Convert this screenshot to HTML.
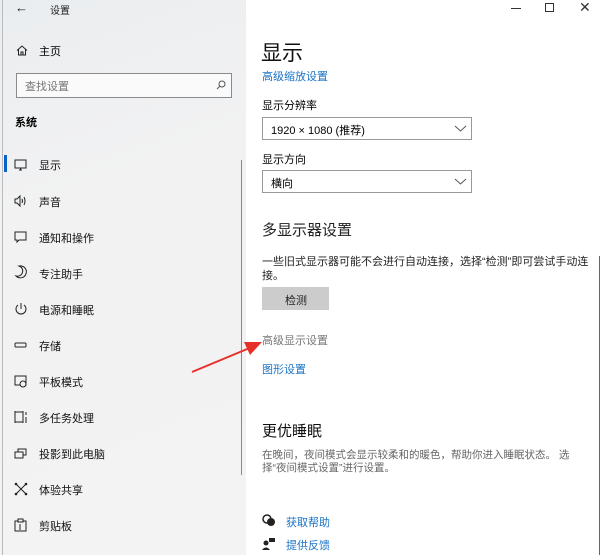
<!DOCTYPE html>
<html><head><meta charset="utf-8"><style>
*{margin:0;padding:0;box-sizing:border-box}
body{width:602px;height:555px;overflow:hidden;background:#fff;position:relative;font-family:"Liberation Sans","Noto Sans CJK SC",sans-serif;color:#000}
.a{position:absolute;white-space:nowrap}
#left{position:absolute;left:0;top:0;width:246px;height:555px;background:linear-gradient(160deg,#eaedf0 0%,#f2f2f2 35%,#f3f3f3 100%)}
.it{position:absolute;left:39px;font-size:11px;color:#111}
.ic{position:absolute;left:14px;width:14px;height:14px}
.lnk{color:#1a73c4}
svg{overflow:visible}
</style></head><body>
<div id="left"></div>
<div class="a" style="left:2px;top:0;width:1px;height:555px;background:#bbb"></div>
<div class="a" style="left:15px;top:0;font-size:13px;color:#222">←</div>
<div class="a" style="left:50px;top:2px;font-size:10px;color:#222">设置</div>
<svg class="a" style="left:16px;top:45px" width="12" height="11" viewBox="0 0 12 11"><path d="M1 5.5L6 1L11 5.5M2.5 4.5V10H9.5V4.5M5 10V7H7V10" fill="none" stroke="#222" stroke-width="1"/></svg>
<div class="a" style="left:39px;top:43px;font-size:11px">主页</div>
<div class="a" style="left:16px;top:73px;width:216px;height:25px;border:1px solid #8a8a8a;background:#fafafa"></div>
<div class="a" style="left:25px;top:78px;font-size:11px;color:#777">查找设置</div>
<svg class="a" style="left:216px;top:80px" width="10" height="10"><circle cx="6" cy="4" r="3" fill="none" stroke="#555"/><path d="M4 6L1 9" stroke="#555"/></svg>
<div class="a" style="left:15px;top:114px;font-size:11px;font-weight:bold">系统</div>
<div class="a" style="left:4px;top:155px;width:3px;height:17px;background:#0a64c8"></div>
<div class="a" style="left:241px;top:160px;width:1px;height:315px;background:#888"></div>

<svg class="ic" style="top:158px" viewBox="0 0 14 14"><rect x="1" y="2" width="11" height="8" fill="none" stroke="#222"/><path d="M5 12H8M6.5 10V12" stroke="#222"/></svg>
<div class="it" style="top:157px">显示</div>
<svg class="ic" style="top:194px" viewBox="0 0 14 14"><path d="M1 5H3L6 2V12L3 9H1Z" fill="none" stroke="#222"/><path d="M8 5Q9 7 8 9M10 3Q12 7 10 11" fill="none" stroke="#222"/></svg>
<div class="it" style="top:194px">声音</div>
<svg class="ic" style="top:230px" viewBox="0 0 14 14"><path d="M1 2H12V10H5L3 12V10H1Z" fill="none" stroke="#222"/></svg>
<div class="it" style="top:230px">通知和操作</div>
<svg class="ic" style="top:265px" viewBox="0 0 14 14"><path d="M5 1A6 6 0 1 1 2 11A5 5 0 0 0 5 1Z" fill="none" stroke="#222"/></svg>
<div class="it" style="top:266px">专注助手</div>
<svg class="ic" style="top:302px" viewBox="0 0 14 14"><path d="M4 3A5 5 0 1 0 10 3" fill="none" stroke="#222"/><path d="M7 1V7" stroke="#222"/></svg>
<div class="it" style="top:302px">电源和睡眠</div>
<svg class="ic" style="top:338px" viewBox="0 0 14 14"><rect x="1" y="5" width="11" height="4" rx="1" fill="none" stroke="#222"/></svg>
<div class="it" style="top:338px">存储</div>
<svg class="ic" style="top:374px" viewBox="0 0 14 14"><rect x="1" y="2" width="11" height="9" fill="none" stroke="#222"/><circle cx="9" cy="10" r="3" fill="#f2f2f2" stroke="#222"/></svg>
<div class="it" style="top:374px">平板模式</div>
<svg class="ic" style="top:410px" viewBox="0 0 14 14"><path d="M1 1V13M1 2H9M1 12H9M9 1V13M12 2V5M12 7V13" fill="none" stroke="#222"/></svg>
<div class="it" style="top:410px">多任务处理</div>
<svg class="ic" style="top:446px" viewBox="0 0 14 14"><rect x="1" y="6" width="8" height="6" fill="none" stroke="#222"/><path d="M4 6V3H12V9H9" fill="none" stroke="#222"/></svg>
<div class="it" style="top:446px">投影到此电脑</div>
<svg class="ic" style="top:482px" viewBox="0 0 14 14"><path d="M2 2L12 12M12 2L2 12" stroke="#222"/><circle cx="2" cy="2" r="1.3" fill="#222"/><circle cx="12" cy="2" r="1.3" fill="#222"/><circle cx="2" cy="12" r="1.3" fill="#222"/><circle cx="12" cy="12" r="1.3" fill="#222"/></svg>
<div class="it" style="top:482px">体验共享</div>
<svg class="ic" style="top:518px" viewBox="0 0 14 14"><rect x="1" y="3" width="11" height="10" fill="none" stroke="#222"/><rect x="4" y="1" width="5" height="3" fill="#f2f2f2" stroke="#222"/><path d="M6 6V12" stroke="#222"/></svg>
<div class="it" style="top:518px">剪贴板</div>

<!-- arrow -->
<svg class="a" style="left:0;top:0" width="602" height="555"><path d="M192 372L252 347" stroke="#e8302a" stroke-width="2"/><path d="M262 342L244 342L250 355Z" fill="#e8302a"/></svg>

<!-- window controls -->
<div class="a" style="left:511px;top:8px;width:10px;height:1px;background:#333"></div>
<div class="a" style="left:545px;top:3px;width:9px;height:9px;border:1px solid #333"></div>
<div class="a" style="left:579px;top:-1px;font-size:14px;color:#333">✕</div>

<div class="a" style="left:261px;top:37px;font-size:21px;color:#111">显示</div>
<div class="a lnk" style="left:262px;top:68px;font-size:11px">高级缩放设置</div>
<div class="a" style="left:262px;top:97px;font-size:11px">显示分辨率</div>
<div class="a" style="left:262px;top:117px;width:210px;height:23px;border:1px solid #999"></div>
<div class="a" style="left:271px;top:122px;font-size:11px">1920 × 1080 (推荐)</div>
<svg class="a" style="left:455px;top:126px" width="11" height="6"><path d="M0 0L5.5 5L11 0" fill="none" stroke="#555"/></svg>
<div class="a" style="left:262px;top:151px;font-size:11px">显示方向</div>
<div class="a" style="left:262px;top:170px;width:210px;height:23px;border:1px solid #999"></div>
<div class="a" style="left:271px;top:175px;font-size:11px">横向</div>
<svg class="a" style="left:455px;top:179px" width="11" height="6"><path d="M0 0L5.5 5L11 0" fill="none" stroke="#555"/></svg>
<div class="a" style="left:262px;top:219px;font-size:15px;color:#222">多显示器设置</div>
<div class="a" style="left:262px;top:253px;font-size:11px;color:#222">一些旧式显示器可能不会进行自动连接，选择“检测”即可尝试手动连</div>
<div class="a" style="left:262px;top:267px;font-size:11px;color:#222">接。</div>
<div class="a" style="left:262px;top:287px;width:67px;height:23px;background:#ccc"></div>
<div class="a" style="left:285px;top:292px;font-size:11px;color:#222">检测</div>
<div class="a" style="left:262px;top:332px;font-size:11px;color:#777">高级显示设置</div>
<div class="a lnk" style="left:262px;top:361px;font-size:11px">图形设置</div>
<div class="a" style="left:262px;top:420px;font-size:15px;color:#111">更优睡眠</div>
<div class="a" style="left:262px;top:447px;font-size:10.5px;color:#666">在晚间，夜间模式会显示较柔和的暖色，帮助你进入睡眠状态。 选</div>
<div class="a" style="left:262px;top:460px;font-size:10.5px;color:#666">择“夜间模式设置”进行设置。</div>
<svg class="a" style="left:262px;top:514px" width="14" height="14"><circle cx="5" cy="5" r="4" fill="none" stroke="#222" stroke-width="1.5"/><circle cx="9" cy="8" r="4" fill="#222"/></svg>
<div class="a lnk" style="left:286px;top:514px;font-size:11px">获取帮助</div>
<svg class="a" style="left:262px;top:537px" width="14" height="14"><circle cx="4" cy="6" r="2.5" fill="#222"/><path d="M0 13Q4 8 8 13Z" fill="#222"/><rect x="7" y="1" width="6" height="4" fill="#222"/></svg>
<div class="a lnk" style="left:286px;top:537px;font-size:11px">提供反馈</div>
<div class="a" style="left:599px;top:256px;width:1px;height:299px;background:#666"></div>
</body></html>
